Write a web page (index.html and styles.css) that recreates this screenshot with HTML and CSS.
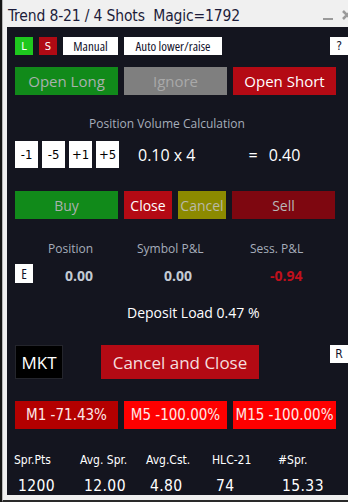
FILE: index.html
```html
<!DOCTYPE html>
<html>
<head>
<meta charset="utf-8">
<link rel="stylesheet" href="styles.css">
</head>
<body>
<div class="chart-strip"></div>
<div class="window">
  <div class="titlebar">
    <span class="title">Trend 8-21 / 4 Shots&nbsp; Magic=1792</span>
    <span class="tb-icons">
      <svg width="34" height="14" viewBox="0 0 34 14">
        <rect x="2" y="10" width="10" height="2" fill="#9a9a9a"/>
        <path d="M22 3 L30 11 M30 3 L22 11" stroke="#9a9a9a" stroke-width="2.6"/>
      </svg>
    </span>
  </div>
  <div class="panel">
    <div class="row row-top">
      <div class="tag tag-l">L</div>
      <div class="tag tag-s">S</div>
      <div class="tag tag-w manual">Manual</div>
      <div class="tag tag-w auto">Auto lower/raise</div>
      <div class="tag tag-w help">?</div>
    </div>
    <div class="row row-big">
      <div class="btn green dim">Open Long</div>
      <div class="btn gray">Ignore</div>
      <div class="btn red">Open Short</div>
    </div>
    <div class="section-title">Position Volume Calculation</div>
    <div class="row row-vol">
      <div class="step">-1</div>
      <div class="step">-5</div>
      <div class="step">+1</div>
      <div class="step">+5</div>
      <div class="vol">0.10 x 4</div>
      <div class="eq">=</div>
      <div class="total">0.40</div>
    </div>
    <div class="row row-big row-trade">
      <div class="btn green dim">Buy</div>
      <div class="btn red small">Close</div>
      <div class="btn olive small">Cancel</div>
      <div class="btn darkred">Sell</div>
    </div>
    <div class="row pl-labels">
      <div class="pl-l1">Position</div>
      <div class="pl-l2">Symbol P&amp;L</div>
      <div class="pl-l3">Sess. P&amp;L</div>
    </div>
    <div class="row pl-values">
      <div class="tag tag-w ebox">E</div>
      <div class="pl-v1">0.00</div>
      <div class="pl-v2">0.00</div>
      <div class="pl-v3 neg">-0.94</div>
    </div>
    <div class="deposit">Deposit Load 0.47 %</div>
    <div class="row row-mkt">
      <div class="mkt">MKT</div>
      <div class="cancel-close">Cancel and Close</div>
      <div class="tag tag-w rbox">R</div>
    </div>
    <div class="row row-big row-tf">
      <div class="btn tf tf-dark">M1 -71.43%</div>
      <div class="btn tf tf-bright">M5 -100.00%</div>
      <div class="btn tf tf-bright">M15 -100.00%</div>
    </div>
    <div class="stats stats-labels">
      <div>Spr.Pts</div>
      <div>Avg. Spr.</div>
      <div>Avg.Cst.</div>
      <div>HLC-21</div>
      <div>#Spr.</div>
    </div>
    <div class="stats stats-values">
      <div>1200</div>
      <div>12.00</div>
      <div>4.80</div>
      <div>74</div>
      <div>15.33</div>
    </div>
  </div>
</div>
</body>
</html>
```
FILE: styles.css
```css
* { box-sizing: border-box; }
html, body { margin: 0; padding: 0; }
body {
  width: 348px;
  height: 502px;
  overflow: hidden;
  display: flex;
  background: #f0f0f0;
  font-family: "Open Sans", "Noto Sans", sans-serif;
}
.chart-strip {
  width: 2px;
  height: 502px;
  background: #161616;
  flex: none;
}
.window {
  flex: 1;
  height: 502px;
  background: #f0f0f0;
  border-left: 1px solid #b8b8b8;
  border-bottom: 2px solid #2a2a2a;
  display: flex;
  flex-direction: column;
}
.titlebar {
  height: 27px;
  display: flex;
  align-items: flex-end;
  padding-left: 5px;
  padding-bottom: 1px;
}
.title {
  font-family: "DejaVu Sans", sans-serif;
  font-stretch: condensed;
  font-size: 15.5px;
  color: #1c1c3a;
  line-height: 20px;
  letter-spacing: -0.15px;
}
.tb-icons {
  margin-left: auto;
  margin-right: 4px;
  margin-bottom: 4px;
  display: flex;
}
.panel {
  margin-left: 4px;
  margin-right: 3px;
  height: 468px;
  background: #14151f;
  padding: 10px 8px 0 8px;
  display: flex;
  flex-direction: column;
}
.row { display: flex; align-items: center; }
.row-top { height: 18px; gap: 6px; }
.tag {
  height: 18px;
  display: flex;
  align-items: center;
  justify-content: center;
  font-size: 13px;
  font-family: "DejaVu Sans", sans-serif;
  font-stretch: condensed;
}
.tag-l { width: 18px; background: #1ec81e; color: #ffffff; font-size: 11px; }
.tag-s { width: 18px; background: #b00a14; color: #ffffff; font-size: 11px; }
.tag-w { background: #ffffff; color: #10102a; }
.manual { width: 55px; font-family: "Open Sans", sans-serif; font-size: 13px; }
.auto { width: 98px; font-family: "Open Sans", sans-serif; font-size: 13px; }
.help { width: 18px; margin-left: auto; font-size: 12px; }

.row-big { height: 28px; margin-top: 12px; gap: 6px; }
.btn {
  height: 28px;
  width: 103px;
  display: flex;
  align-items: center;
  justify-content: center;
  font-size: 15px;
  color: #ffffff;
}
.green { background: #118a1a; }
.dim { color: #a9b1ae; }
.gray { background: #7f7f7f; color: #a9a9a9; }
.red { background: #b40a14; color: #ffffff; }
.olive { background: #8c8a00; color: #b9b9a8; }
.darkred { background: #7e0710; color: #b8b8b8; }
.small { width: 48px; font-size: 14px; }
.row-trade { margin-top: 23px; }
.row-trade .btn { font-size: 14px; }

.section-title {
  margin-top: 21px;
  margin-left: 74px;
  height: 16px;
  line-height: 16px;
  font-size: 12px;
  color: #a6adbb;
}
.row-vol { margin-top: 9px; height: 27px; }
.step {
  width: 23px;
  height: 27px;
  margin-right: 4px;
  background: #ffffff;
  color: #000000;
  display: flex;
  align-items: center;
  justify-content: center;
  font-family: "DejaVu Sans", sans-serif;
  font-stretch: condensed;
  font-size: 13px;
}
.vol { margin-left: 15px; color: #ffffff; font-size: 16px; }
.eq { margin-left: 53px; color: #ffffff; font-size: 16px; }
.total { margin-left: 11px; color: #ffffff; font-size: 16px; }

.pl-labels {
  margin-top: 21px;
  height: 16px;
  font-size: 12px;
  color: #a6adbb;
}
.pl-l1 { margin-left: 33px; width: 89px; }
.pl-l2 { width: 113px; }
.pl-values {
  margin-top: 8px;
  height: 19px;
  font-size: 14px;
  font-weight: 700;
  color: #c3cad3;
}
.ebox { width: 18px; height: 19px; font-size: 14px; font-family: "Open Sans", sans-serif; font-weight: 400; }
.pl-values > div:not(.ebox) { padding-top: 4px; }
.pl-v1 { margin-left: 32px; width: 99px; }
.pl-v2 { width: 106px; }
.neg { color: #c0101c; }

.deposit {
  margin-top: 21px;
  margin-left: 112px;
  height: 18px;
  line-height: 18px;
  font-size: 14px;
  color: #ffffff;
}
.row-mkt { margin-top: 23px; height: 34px; align-items: flex-start; }
.mkt {
  width: 48px;
  height: 34px;
  background: #000000;
  border: 1px solid #24252c;
  color: #ffffff;
  font-size: 17px;
  display: flex;
  align-items: center;
  justify-content: center;
}
.cancel-close {
  margin-left: 38px;
  width: 158px;
  height: 34px;
  background: #b40a14;
  color: #f4dede;
  font-size: 17px;
  display: flex;
  align-items: center;
  justify-content: center;
}
.rbox { width: 18px; margin-left: auto; font-size: 12px; }

.row-tf { margin-top: 22px; }
.tf {
  font-family: "DejaVu Sans", sans-serif;
  font-stretch: condensed;
  font-size: 15px;
  color: #fde8e8;
}
.tf-dark { background: #b40000; }
.tf-bright { background: #ff0000; }

.stats {
  display: grid;
  grid-template-columns: repeat(5, 66px);
  color: #ffffff;
  font-family: "DejaVu Sans", sans-serif;
  font-stretch: condensed;
}
.stats-labels {
  margin-top: 23px;
  margin-left: -1px;
  height: 16px;
  line-height: 16px;
  font-size: 12px;
}
.stats-values {
  margin-top: 9px;
  margin-left: 3px;
  height: 18px;
  line-height: 18px;
  font-size: 15.5px;
  letter-spacing: 0.4px;
}
```
